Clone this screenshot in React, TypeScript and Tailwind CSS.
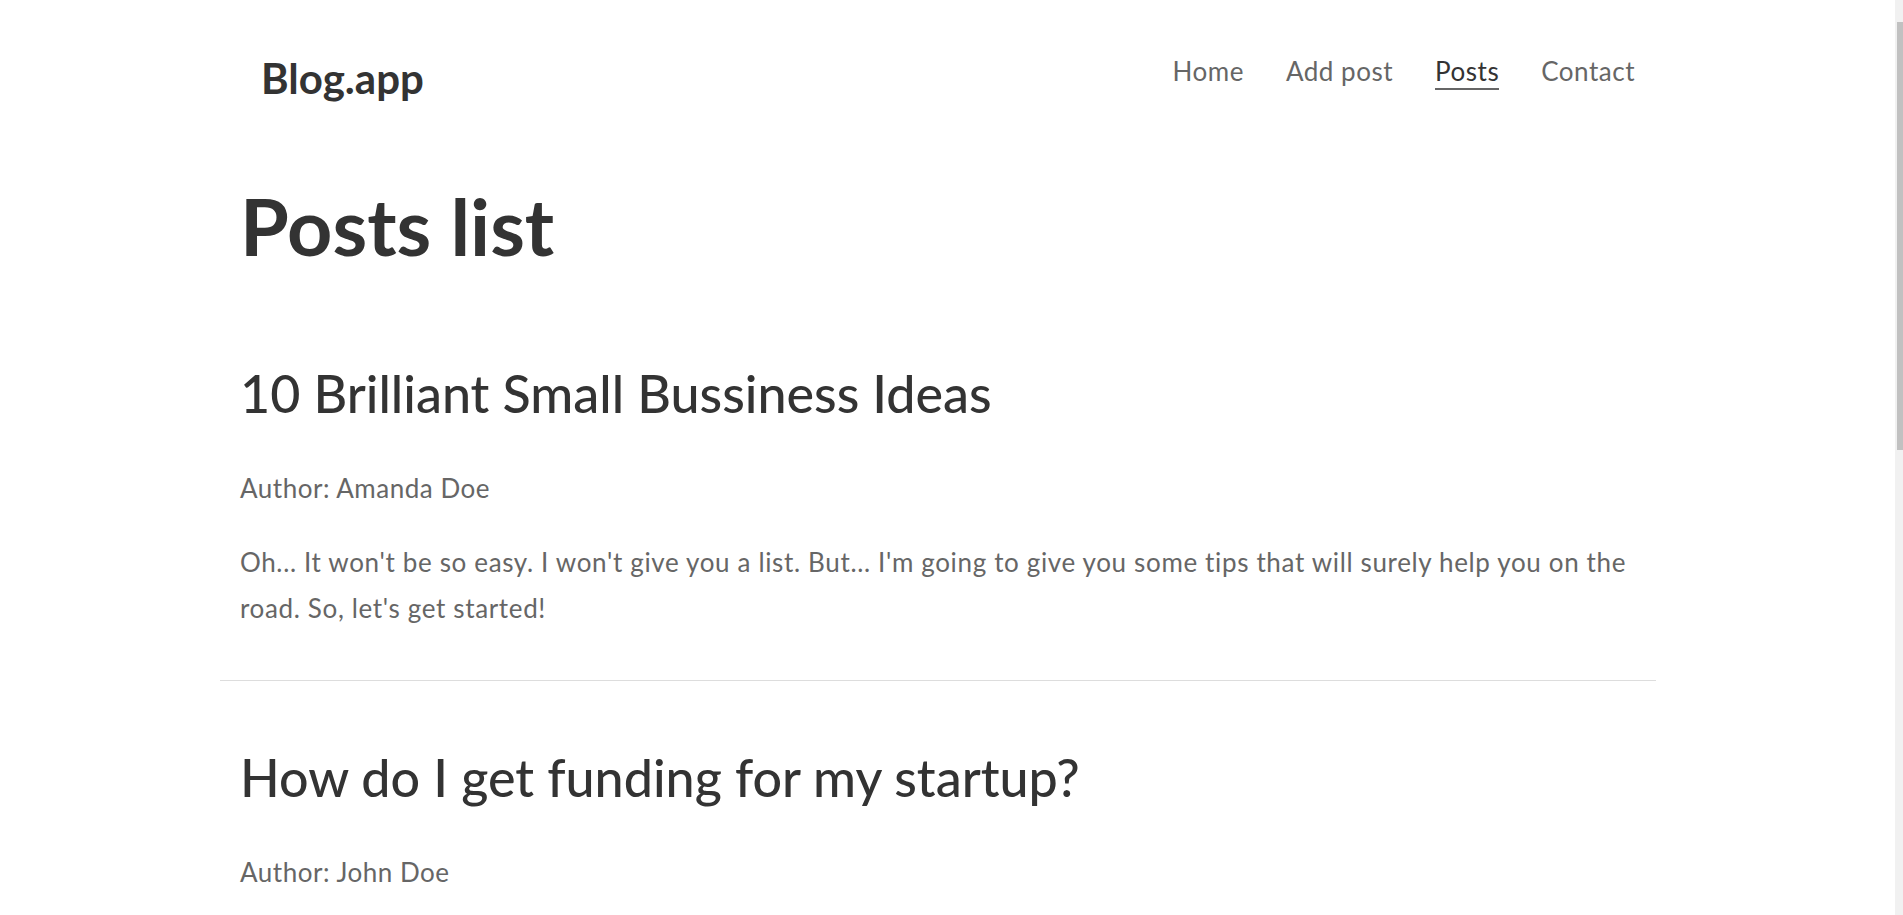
import React from 'react';

type Post = {
    id: number;
    title: string;
    author: string;
    body?: string;
};

const posts: Post[] = [
    {
        id: 1,
        title: '10 Brilliant Small Bussiness Ideas',
        author: 'Amanda Doe',
        body: "Oh... It won't be so easy. I won't give you a list. But... I'm going to give you some tips that will surely help you on the road. So, let's get started!",
    },
    {
        id: 2,
        title: 'How do I get funding for my startup?',
        author: 'John Doe',
    },
];

const links = ['Home', 'Add post', 'Posts', 'Contact'];

function Header() {
    return (
        <header className="flex items-start justify-between pl-[41px] pr-[21px] pt-[49px]">
            <a href="#" className="text-[42px] leading-[58px] font-bold text-[#333]">
                Blog.app
            </a>
            <nav className="flex gap-[42px] pt-[5px]">
                {links.map((link) => (
                    <a
                        key={link}
                        href="#"
                        className={
                            link === 'Posts'
                                ? 'border-b-2 border-[#666] text-[26px] leading-[34px] tracking-[0.02em] text-[#333]'
                                : 'border-b-2 border-transparent text-[26px] leading-[34px] tracking-[0.02em] text-[#666]'
                        }
                    >
                        {link}
                    </a>
                ))}
            </nav>
        </header>
    );
}

function PostItem({ post }: { post: Post }) {
    return (
        <article className="border-b border-[#ddd] px-5 pt-[64px] pb-[49px]">
            <h2 className="text-[52px] leading-[64px] font-medium text-[#333]">{post.title}</h2>
            <p className="mt-[40px] text-[26px] leading-[46px] tracking-[0.02em] text-[#666]">
                Author: {post.author}
            </p>
            {post.body && (
                <p className="mt-[28px] text-[26px] leading-[46px] tracking-[0.025em] text-[#666]">
                    {post.body}
                </p>
            )}
        </article>
    );
}

function Scrollbar() {
    return (
        <div className="fixed top-0 right-0 h-screen w-[8px] bg-[#f1f1f1]">
            <div className="mt-[22px] ml-[2px] h-[428px] w-[6px] bg-[#c1c1c1]" />
        </div>
    );
}

export default function App() {
    return (
        <div className="min-h-screen bg-white pr-[27px] font-['Lato',sans-serif]">
            <div className="mx-auto max-w-[1436px]">
                <Header />
                <main>
                    <h1 className="mt-[69px] mb-[21px] px-5 text-[79px] leading-[100px] font-bold text-[#333]">
                        Posts list
                    </h1>
                    {posts.map((post) => (
                        <PostItem
                            key={post.id}
                            post={post}
                        />
                    ))}
                </main>
            </div>
            <Scrollbar />
        </div>
    );
}
